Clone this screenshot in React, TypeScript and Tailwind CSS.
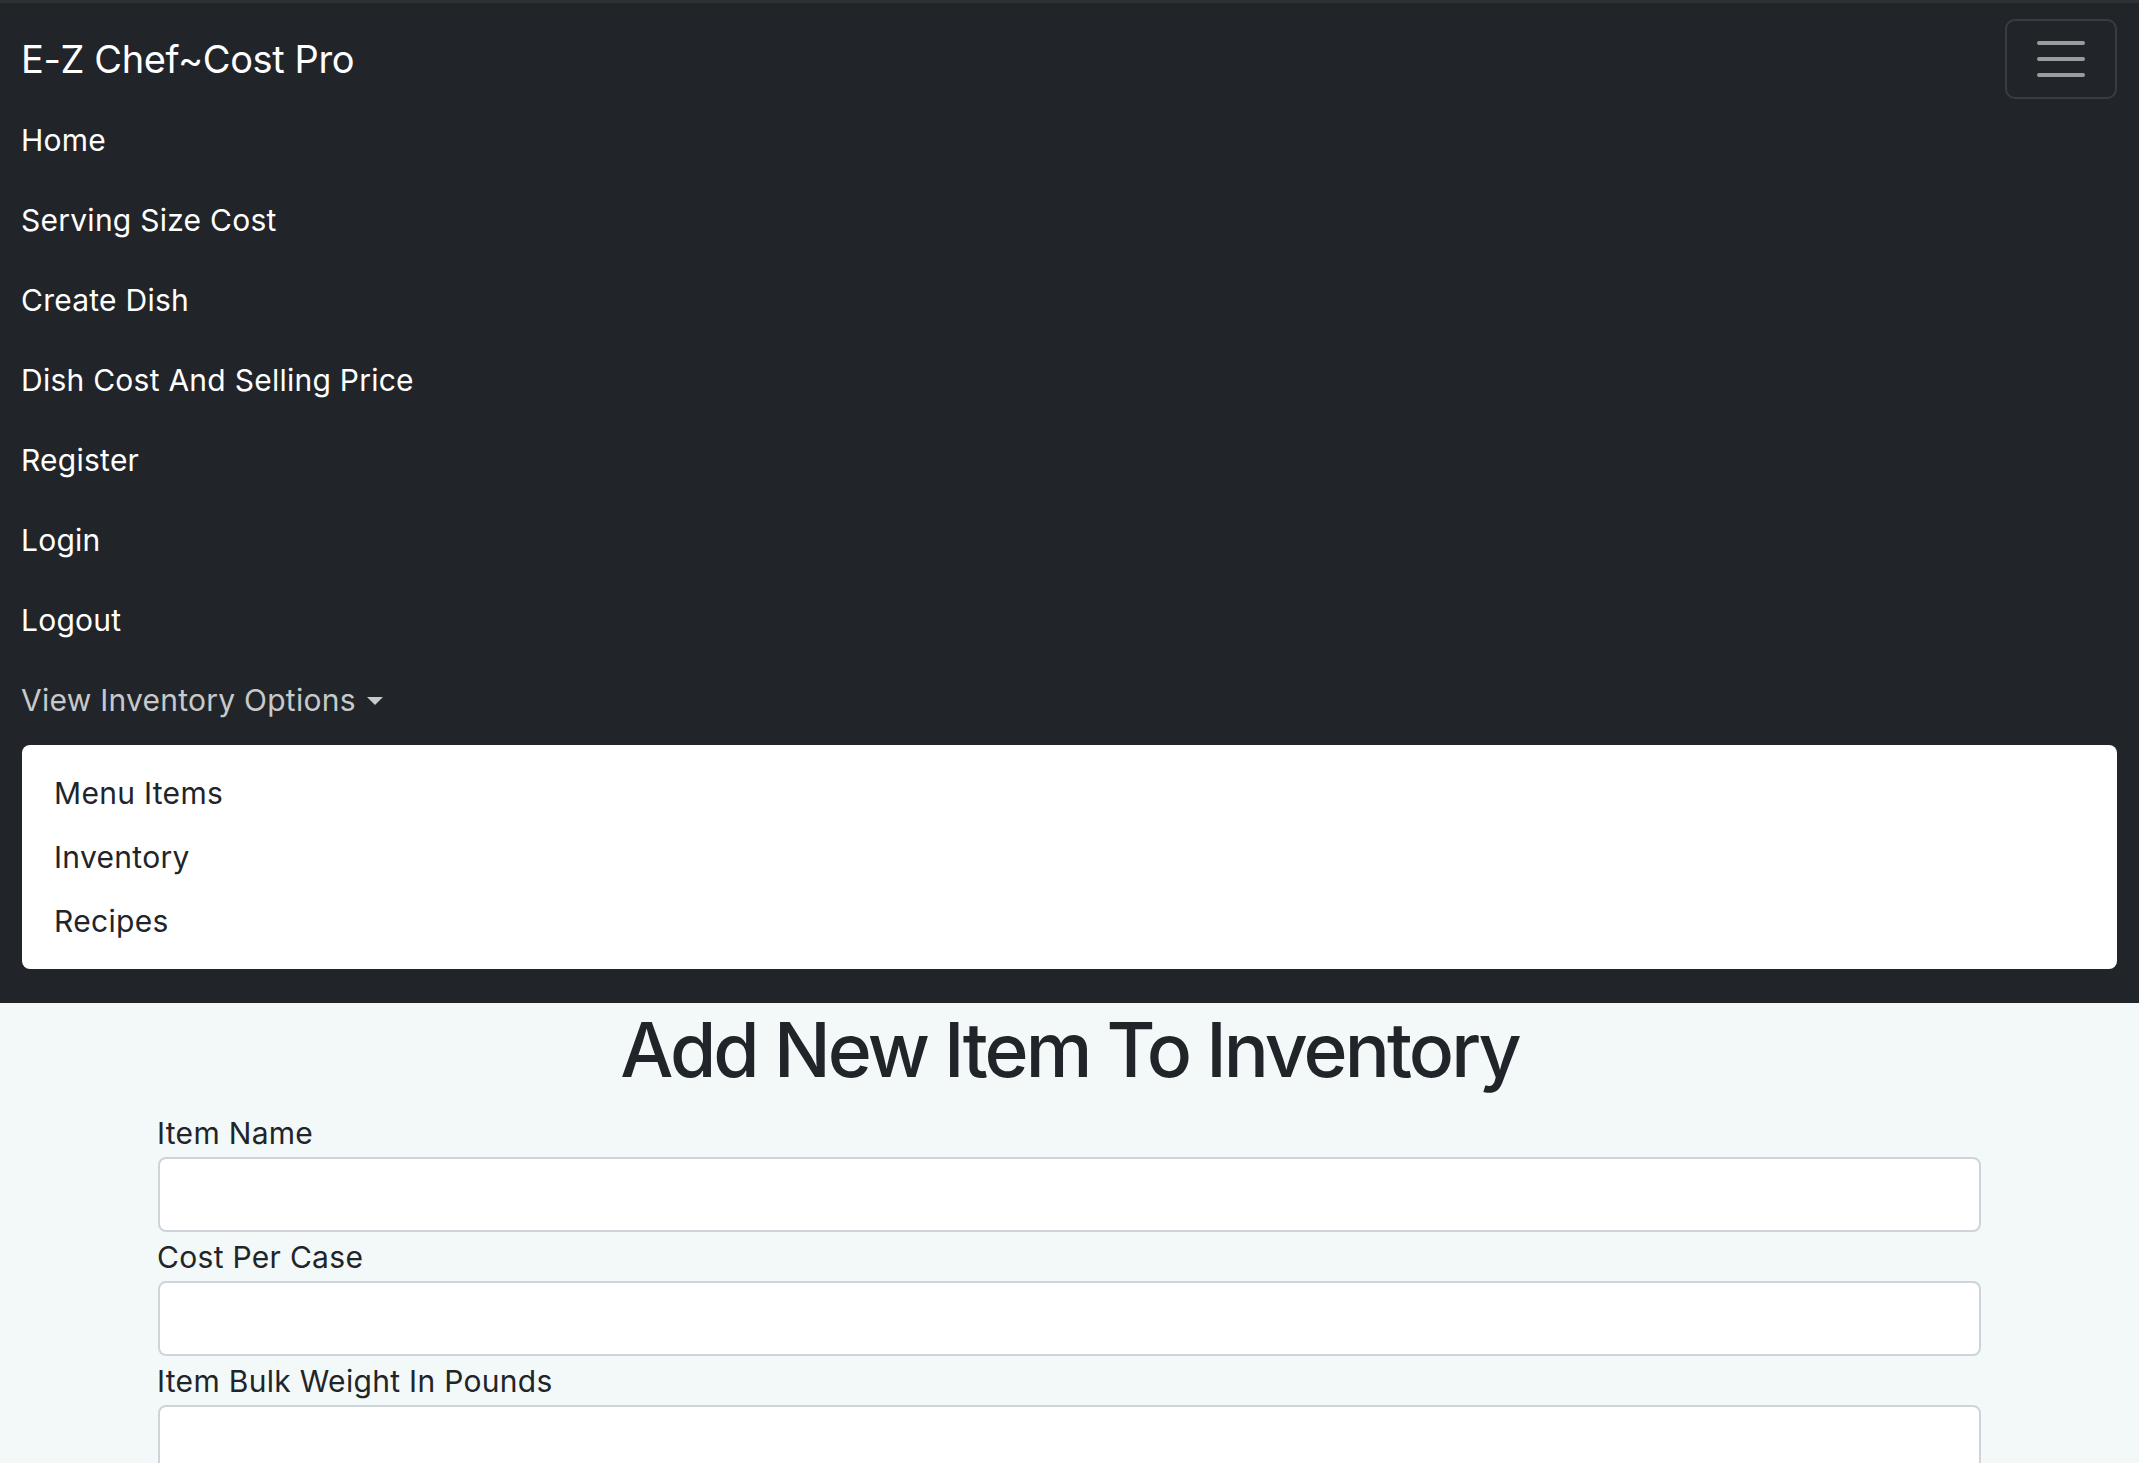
import React from "react";

const links = [
  "Home",
  "Serving Size Cost",
  "Create Dish",
  "Dish Cost And Selling Price",
  "Register",
  "Login",
  "Logout",
];

const dropdownItems = ["Menu Items", "Inventory", "Recipes"];

const fields = ["Item Name", "Cost Per Case", "Item Bulk Weight In Pounds"];

const App = () => {
  return (
    <div className="min-h-screen bg-[#f3f8f8] font-['Inter','Liberation_Sans',sans-serif] text-[#212529]">
      <nav className="bg-[#212529] border-t-[3px] border-[#2e3033] pl-[21px] pr-[22px] pt-[16px] pb-[34px]">
        <div className="flex h-[80px] items-center justify-between">
          <a className="text-[38px] leading-[56px] tracking-[-0.4px] text-white">E-Z Chef~Cost Pro</a>
          <button className="flex h-[80px] w-[112px] items-center justify-center rounded-[10px] border-2 border-[#3a3c40]">
            <svg width="52" height="40" viewBox="0 0 52 40">
              <path
                d="M4 4H48M4 20H48M4 36H48"
                stroke="#9b9c9e"
                strokeWidth="4"
                strokeLinecap="round"
              />
            </svg>
          </button>
        </div>

        <ul className="mt-[1px] flex flex-col">
          {links.map((link) => (
            <li key={link} className="flex h-[80px] items-center">
              <a className="text-[30px] leading-[45px] tracking-[0.25px] text-white">{link}</a>
            </li>
          ))}
          <li className="flex h-[80px] items-center">
            <a className="flex items-center text-[30px] leading-[45px] tracking-[0.25px] text-[#c8c9ca]">
              View Inventory Options
              <span className="ml-[11px] mt-[2px] h-0 w-0 border-x-[8px] border-t-[8px] border-x-transparent border-t-[#c8c9ca]" />
            </a>
          </li>
        </ul>

        <div className="ml-[1px] mt-[5px] rounded-[8px] bg-white py-[16px]">
          {dropdownItems.map((item) => (
            <div
              key={item}
              className="flex h-[64px] items-center px-[32px] text-[30px] leading-[45px] tracking-[0.3px] text-[#212529]"
            >
              {item}
            </div>
          ))}
        </div>
      </nav>

      <main>
        <h1 className="mt-[2px] h-[90px] text-center text-[75px] font-medium leading-[90px] tracking-[-2.9px]">
          Add New Item To Inventory
        </h1>
        <form className="mt-[14px] px-[158px]">
          {fields.map((field) => (
            <div key={field} className="mb-[1px]">
              <label className="block h-[48px] text-[30px] leading-[48px] tracking-[0.3px] -ml-[1px]">{field}</label>
              <input
                type="text"
                className="block h-[75px] w-full rounded-[8px] border-2 border-[#ced4da] bg-white px-[22px] text-[30px] outline-none"
              />
            </div>
          ))}
        </form>
      </main>
    </div>
  );
};

export default App;
